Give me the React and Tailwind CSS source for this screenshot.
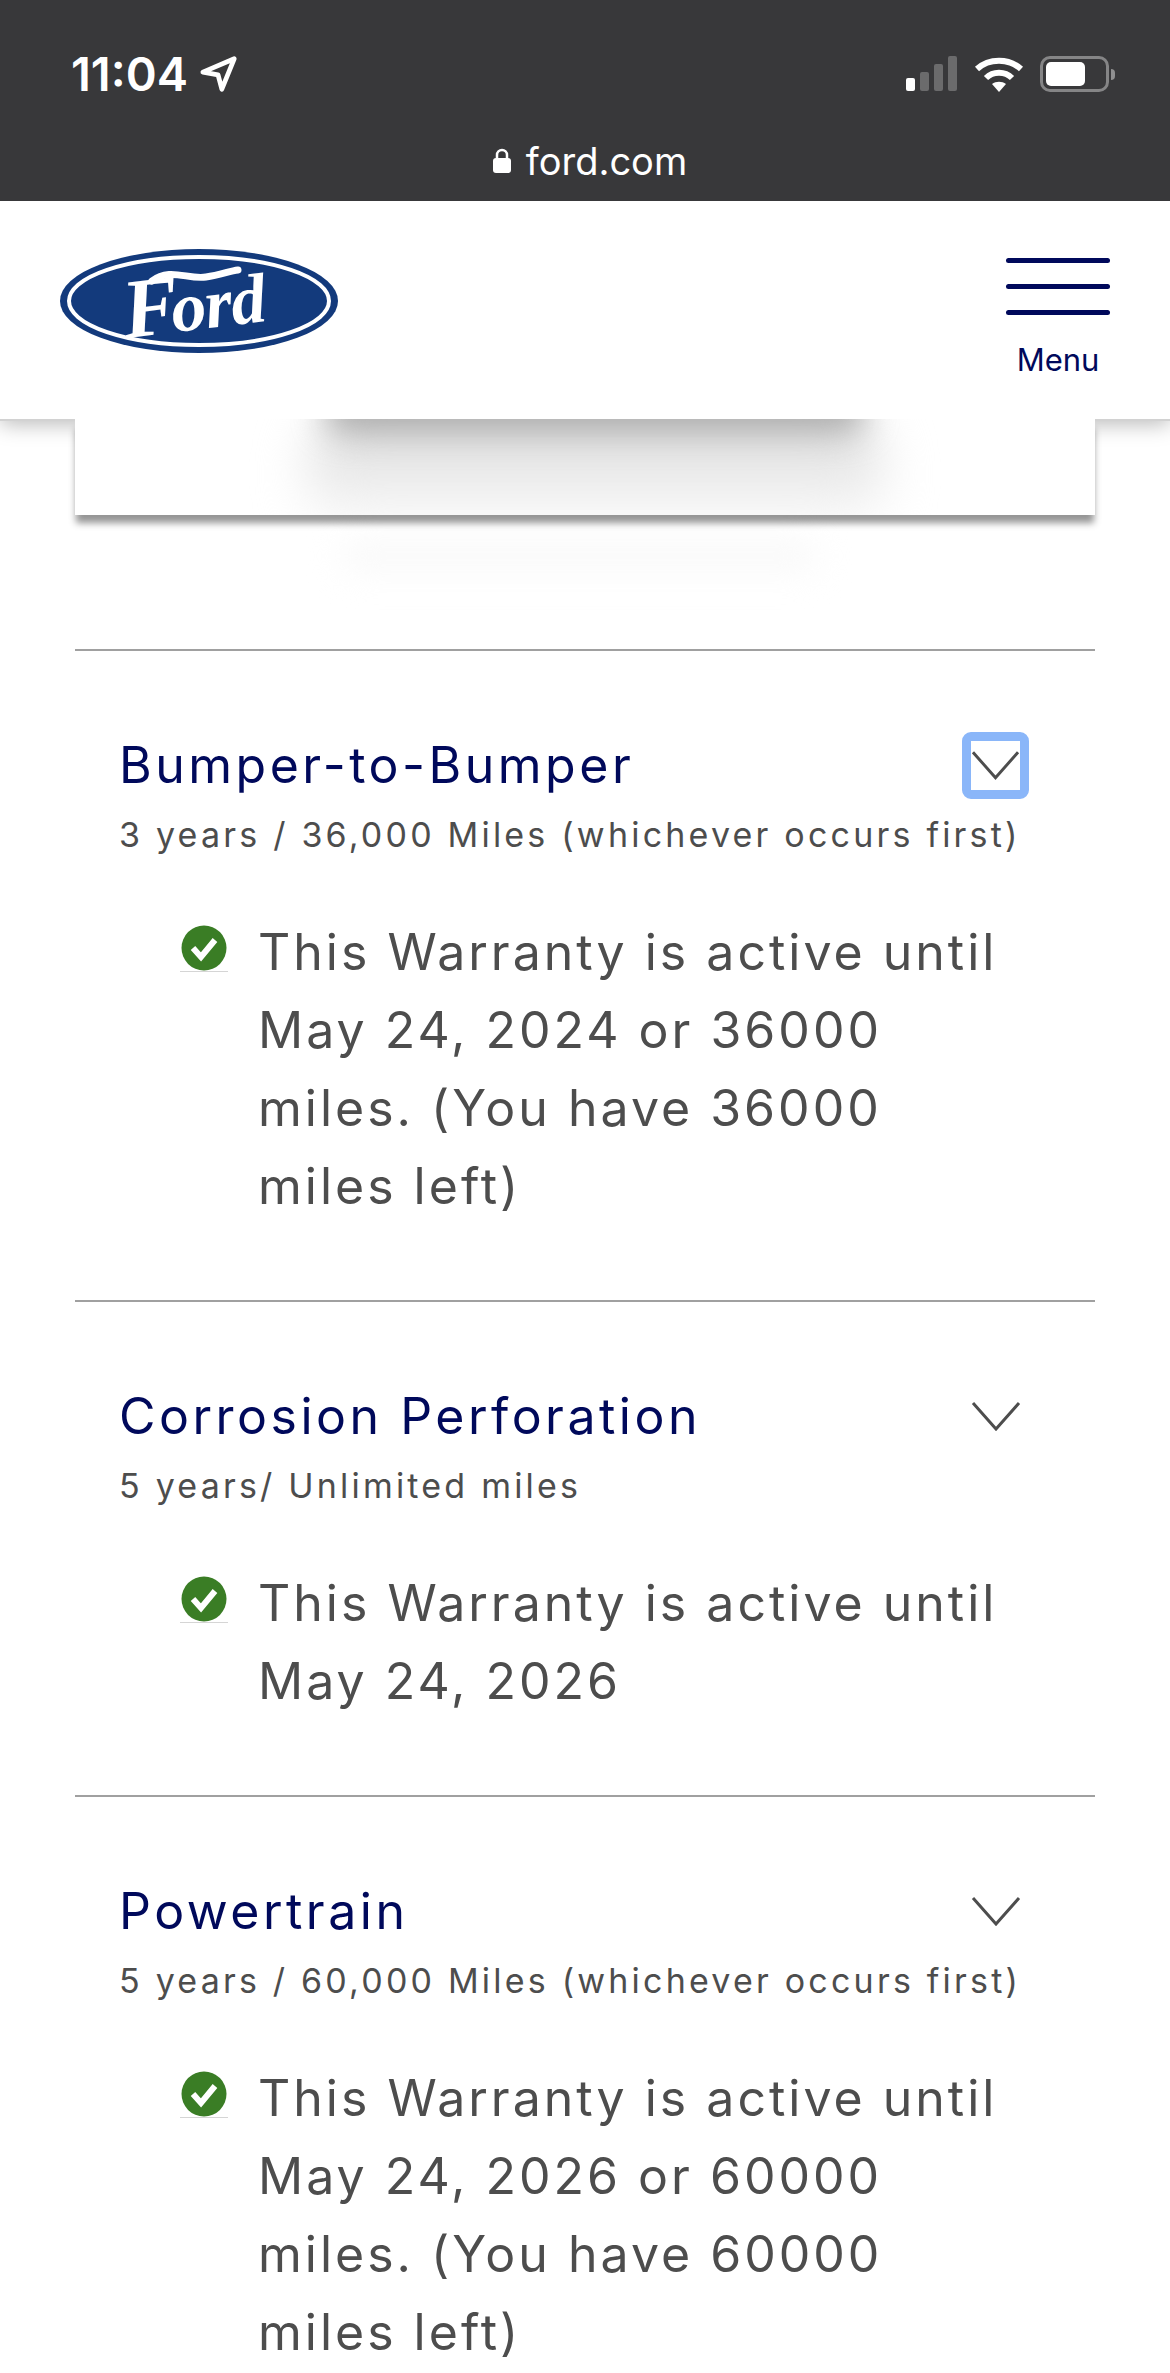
const WARRANTIES = [
  {
    title: 'Bumper-to-Bumper',
    sub: '3 years / 36,000 Miles (whichever occurs first)',
    lines: ['This Warranty is active until', 'May 24, 2024 or 36000', 'miles. (You have 36000', 'miles left)'],
    focused: true,
  },
  {
    title: 'Corrosion Perforation',
    sub: '5 years/ Unlimited miles',
    lines: ['This Warranty is active until', 'May 24, 2026'],
  },
  {
    title: 'Powertrain',
    sub: '5 years / 60,000 Miles (whichever occurs first)',
    lines: ['This Warranty is active until', 'May 24, 2026 or 60000', 'miles. (You have 60000', 'miles left)'],
  },
]

function StatusIcons() {
  return (
    <div className="flex items-center">
      <svg width="52" height="36" viewBox="0 0 52 36">
        <rect x="0" y="22" width="9" height="13" rx="2" fill="#fff" />
        <rect x="14" y="16" width="9" height="19" rx="2" fill="#6b6b6c" />
        <rect x="28" y="8" width="9" height="27" rx="2" fill="#6b6b6c" />
        <rect x="42" y="0" width="9" height="35" rx="2" fill="#6b6b6c" />
      </svg>
      <svg className="ml-[16px]" width="50" height="38" viewBox="0 0 50 38">
        <path d="M3 14 C15 3 35 3 47 14" fill="none" stroke="#fff" strokeWidth="6" />
        <path d="M12 23 C19 16 31 16 38 23" fill="none" stroke="#fff" strokeWidth="6" />
        <path d="M18 29 C22 26 28 26 32 29 L25 37 Z" fill="#fff" />
      </svg>
      <div className="ml-[16px] flex h-[36px] w-[69px] items-center rounded-[10px] border-[3px] border-[#858586] pl-[3px]">
        <div className="h-[24px] w-[39px] rounded-[5px] bg-white" />
      </div>
      <div className="ml-[2px] h-[11px] w-[4px] rounded-r-full bg-[#8f8f90]" />
    </div>
  )
}

function FordLogo() {
  return (
    <svg width="278" height="104" viewBox="0 0 278 104" className="overflow-visible">
      <ellipse cx="139" cy="52" rx="139" ry="52" fill="#133a7c" />
      <ellipse cx="139" cy="52" rx="130" ry="44" fill="none" stroke="#fff" strokeWidth="4" />
      <g transform="rotate(-7 139 52)">
        <text x="62" y="80" fill="#fff" fontFamily="'Liberation Serif', serif" fontStyle="italic" fontWeight="700" letterSpacing="-1">
          <tspan fontSize="84">F</tspan>
          <tspan dx="-7" fontSize="70">ord</tspan>
        </text>
      </g>
      <path d="M92 32 C110 18 128 31 146 28 C160 26 170 22 178 21" fill="none" stroke="#fff" strokeWidth="7" strokeLinecap="round" />
    </svg>
  )
}

function Chevron({ focused }) {
  const icon = (
    <svg width="50" height="30" viewBox="0 0 50 30" className="block">
      <path d="M2 2 L25 28 L48 2" fill="none" stroke="#4d4d4d" strokeWidth="3" />
    </svg>
  )
  if (focused) {
    return (
      <div className="flex h-[67px] w-[67px] items-center justify-center rounded-[9px] border-[9px] border-[#8ab6f9]">
        {icon}
      </div>
    )
  }
  return <div className="flex h-[67px] w-[67px] items-center justify-center">{icon}</div>
}

function WarrantyRow({ item }) {
  return (
    <section className="border-t-2 border-[#a0a0a0] pb-[75px] pl-[44px] pr-[66px] pt-[84px]">
      <div className="flex h-[60px] items-center justify-between">
        <h2 className="text-[50px] font-normal leading-[60px] tracking-[3.5px] text-[#00095b]">{item.title}</h2>
        <Chevron focused={item.focused} />
      </div>
      <p className="mt-[18px] whitespace-nowrap text-[34px] leading-[44px] tracking-[3.2px] text-[#4d4d4d]">{item.sub}</p>
      <div className="ml-[61px] mt-[56px] flex">
        <div className="mt-[12px] h-[47px] w-[48px] border-b border-[#d5d5d5]">
          <svg width="48" height="46" viewBox="0 0 48 46" className="block">
            <circle cx="24" cy="23" r="22.5" fill="#3a7d25" />
            <path d="M13 23 L21 32 L35 15" fill="none" stroke="#fff" strokeWidth="6" />
          </svg>
        </div>
        <div className="ml-[30px] text-[50px] leading-[78px] tracking-[3px] text-[#4d4d4d]">
          {item.lines.map(line => (
            <div key={line} className="whitespace-nowrap">{line}</div>
          ))}
        </div>
      </div>
    </section>
  )
}

export default function App() {
  return (
    <div className="h-[2373px] w-[1170px] overflow-hidden bg-white font-['Inter',sans-serif]">
      <div className="relative z-30 h-[201px] bg-[#38383a] text-white">
        <div className="flex h-[112px] items-start justify-between pl-[71px] pr-[55px] pt-[55px]">
          <div className="flex items-center">
            <span className="text-[47px] font-semibold leading-[38px]">11:04</span>
            <svg className="ml-[12px]" width="38" height="38" viewBox="0 0 40 38">
              <path d="M3 17 L36 3 L23 35 L19 20 Z" fill="none" stroke="#fff" strokeWidth="5" strokeLinejoin="round" />
            </svg>
          </div>
          <StatusIcons />
        </div>
        <div className="flex items-center justify-center pl-[9px] pt-[26px]">
          <svg width="20" height="26" viewBox="0 0 20 26">
            <path d="M5 12 V7 a5 5 0 0 1 10 0 V12" fill="none" stroke="#fff" strokeWidth="2.5" />
            <rect x="1" y="10" width="18" height="15" rx="3" fill="#fff" />
          </svg>
          <span className="ml-[14px] text-[38px] leading-[46px]">ford.com</span>
        </div>
      </div>

      <header className="relative z-10 flex h-[220px] justify-between border-b-2 border-[#d2d2d2] bg-white pl-[60px] pr-[60px] shadow-[0_3px_20px_rgba(0,0,0,0.28)]">
        <div className="pt-[48px]">
          <FordLogo />
        </div>
        <div className="flex w-[104px] flex-col items-center pt-[57px]">
          <div className="h-[5px] w-[104px] rounded-full bg-[#00095b]" />
          <div className="mt-[21px] h-[5px] w-[104px] rounded-full bg-[#00095b]" />
          <div className="mt-[21px] h-[5px] w-[104px] rounded-full bg-[#00095b]" />
          <span className="mt-[25px] text-[31px] leading-[40px] text-[#00095b]">Menu</span>
        </div>
      </header>

      <div className="relative z-20 mx-[75px] -mt-[2px] h-[96px] overflow-hidden bg-white shadow-[0_9px_7px_-1px_rgba(0,0,0,0.42)]">
        <div className="absolute left-[230px] top-[-10px] h-[130px] w-[580px] rounded-[60px] bg-gradient-to-b from-[#d8d8d8] to-[#ffffff] blur-[24px]" />
        <div className="absolute left-[250px] top-[-28px] h-[40px] w-[540px] rounded-full bg-[#a8a8a8] blur-[16px]" />
      </div>

      <div className="relative h-[134px]">
        <div className="absolute left-[340px] top-[26px] h-[30px] w-[480px] rounded-full bg-[#f9f9f9] blur-[16px]" />
      </div>

      <div className="relative mx-[75px]">
        {WARRANTIES.map(item => (
          <WarrantyRow key={item.title} item={item} />
        ))}
      </div>
    </div>
  )
}
